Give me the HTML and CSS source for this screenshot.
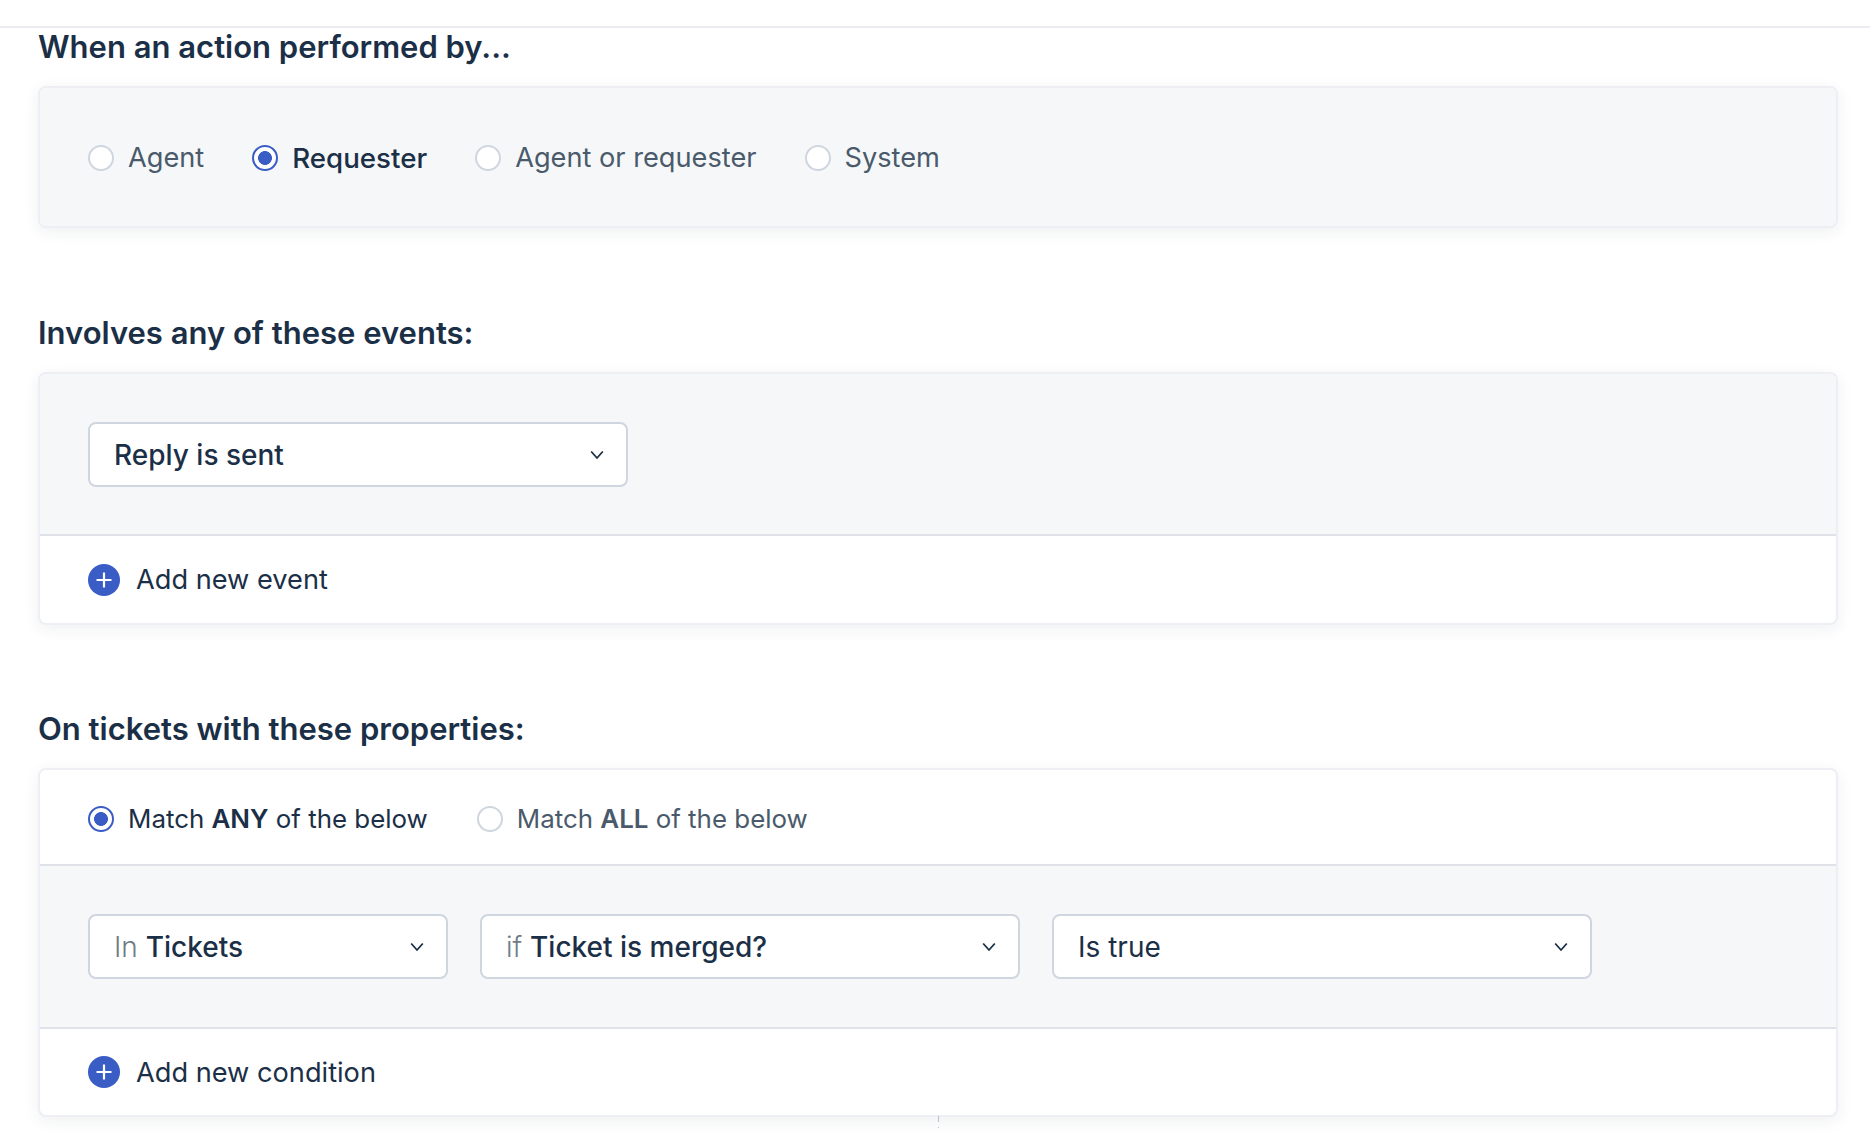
FILE: index.html
```html
<!DOCTYPE html>
<html lang="en">
<head>
<meta charset="utf-8">
<title>Automation rule</title>
<link rel="stylesheet" href="styles.css">
</head>
<body>
<div class="topbar"></div>
<main class="page">
  <section class="section">
    <h2 class="heading">When an action performed by...</h2>
    <div class="card">
      <div class="panel panel-radios">
        <label class="radio"><span class="dot"></span>Agent</label>
        <label class="radio is-on"><span class="dot"></span>Requester</label>
        <label class="radio"><span class="dot"></span>Agent or requester</label>
        <label class="radio"><span class="dot"></span>System</label>
      </div>
    </div>
  </section>
  <section class="section section-events">
    <h2 class="heading">Involves any of these events:</h2>
    <div class="card">
      <div class="panel panel-select panel-event">
        <div class="select sel-event"><span class="val-strong">Reply is sent</span>
          <svg class="chev" viewBox="0 0 14 10"><path d="M1.2 1.5 7 8l5.800-6.500"/></svg>
        </div>
      </div>
      <div class="foot foot-event">
        <svg class="plus" viewBox="0 0 32 32"><circle cx="16" cy="16" r="16"/><path d="M16 8.500v15M8.500 16h15"/></svg>
        <span>Add new event</span>
      </div>
    </div>
  </section>
  <section class="section section-props">
    <h2 class="heading">On tickets with these properties:</h2>
    <div class="card">
      <div class="match">
        <label class="radio radio-match is-on"><span class="dot"></span><span>Match <b>ANY</b> of the below</span></label>
        <label class="radio radio-match"><span class="dot"></span><span>Match <b>ALL</b> of the below</span></label>
      </div>
      <div class="panel panel-select panel-row">
        <div class="select sel-a"><span><span class="pre">In</span> <span class="val-strong">Tickets</span></span>
          <svg class="chev" viewBox="0 0 14 10"><path d="M1.2 1.5 7 8l5.800-6.500"/></svg>
        </div>
        <div class="select sel-b"><span><span class="pre">if</span> <span class="val-strong">Ticket is merged?</span></span>
          <svg class="chev" viewBox="0 0 14 10"><path d="M1.2 1.5 7 8l5.800-6.500"/></svg>
        </div>
        <div class="select sel-b"><span>Is true</span>
          <svg class="chev" viewBox="0 0 14 10"><path d="M1.2 1.5 7 8l5.800-6.500"/></svg>
        </div>
      </div>
      <div class="foot">
        <svg class="plus" viewBox="0 0 32 32"><circle cx="16" cy="16" r="16"/><path d="M16 8.500v15M8.500 16h15"/></svg>
        <span>Add new condition</span>
      </div>
    </div>
  </section>
</main>
<span class="tick"></span>
<span class="tick-dot"></span>
</body>
</html>
```
FILE: styles.css
```css
* { box-sizing: border-box; }
html, body { margin: 0; height: 100%; }
body {
  position: relative;
  height: 1148px;
  overflow: hidden;
  background: #fff;
  color: #1b2f47;
  font-family: Inter, "Noto Sans", sans-serif;
  font-size: 27.2px;
}
.topbar { height: 28px; border-bottom: 2px solid #ebedf2; }
.page { padding: 0 32px 0 38px; }
.section-events { margin-top: 86px; }
.section-props { margin-top: 85px; }
.heading {
  margin: 0 0 20px;
  height: 38px;
  line-height: 38px;
  font-size: 31px;
  font-weight: 600;
  color: #1b2f47;
}
.card {
  background: #fff;
  border: 2px solid #edeff4;
  border-radius: 8px;
  box-shadow: 0 4px 16px rgba(27, 47, 71, 0.07);
  overflow: hidden;
}
.panel { background: #f5f7f9; padding: 48px; }
.panel-radios { display: flex; align-items: center; gap: 48px; height: 138px; padding-top: 1px; padding-bottom: 0; }
.panel-select { display: flex; }
.panel-event { padding-bottom: 47px; border-bottom: 2px solid #dfe2e9; }
.panel-row { gap: 32px; border-top: 2px solid #dfe2e9; border-bottom: 2px solid #dfe2e9; }
.radio { display: flex; align-items: center; gap: 14px; color: #4a5a6b; line-height: 32px; }
.radio.is-on { color: #1b2f47; font-weight: 500; }
.panel-radios .is-on { font-size: 27.7px; }
.dot {
  width: 26px; height: 26px; flex: none;
  border-radius: 50%;
  border: 2px solid #cfd6df;
  background: #fff;
}
.is-on .dot {
  border-color: #3a5cc5;
  background: radial-gradient(circle, #3a5cc5 0 6.600px, #fff 7.200px);
}
.radio-match { font-size: 25.9px; }
.radio b { font-weight: 600; }
.radio-match.is-on { font-weight: 400; }
.match { display: flex; align-items: center; gap: 49px; height: 94px; padding: 4px 48px 0; }
.select {
  display: flex; align-items: center; justify-content: space-between;
  height: 65px;
  padding: 0 22px 0 24px;
  background: #fff;
  border: 2px solid #cfd6df;
  border-radius: 8px;
  font-size: 28px;
  color: #1b2f47;
}
.sel-event, .sel-b { width: 540px; }
.sel-a { width: 360px; }
.val-strong { font-weight: 500; }
.pre { color: #6f7c87; font-weight: 300; }
.chev { width: 14px; height: 10px; fill: none; stroke: #1b2f47; stroke-width: 1.8; }
.foot { display: flex; align-items: center; gap: 16px; height: 86px; padding: 0 48px; color: #1b2f47; }
.foot-event { height: 87px; }
.plus { width: 32px; height: 32px; flex: none; }
.plus circle { fill: #3a5cc5; }
.plus path { stroke: #fff; stroke-width: 2.2; fill: none; }
.tick { position: absolute; left: 938px; top: 1116px; width: 1px; height: 6px; background: #b8c2cc; }
.tick-dot { position: absolute; left: 938px; top: 1127px; width: 1px; height: 1px; background: #b8c2cc; }
```
